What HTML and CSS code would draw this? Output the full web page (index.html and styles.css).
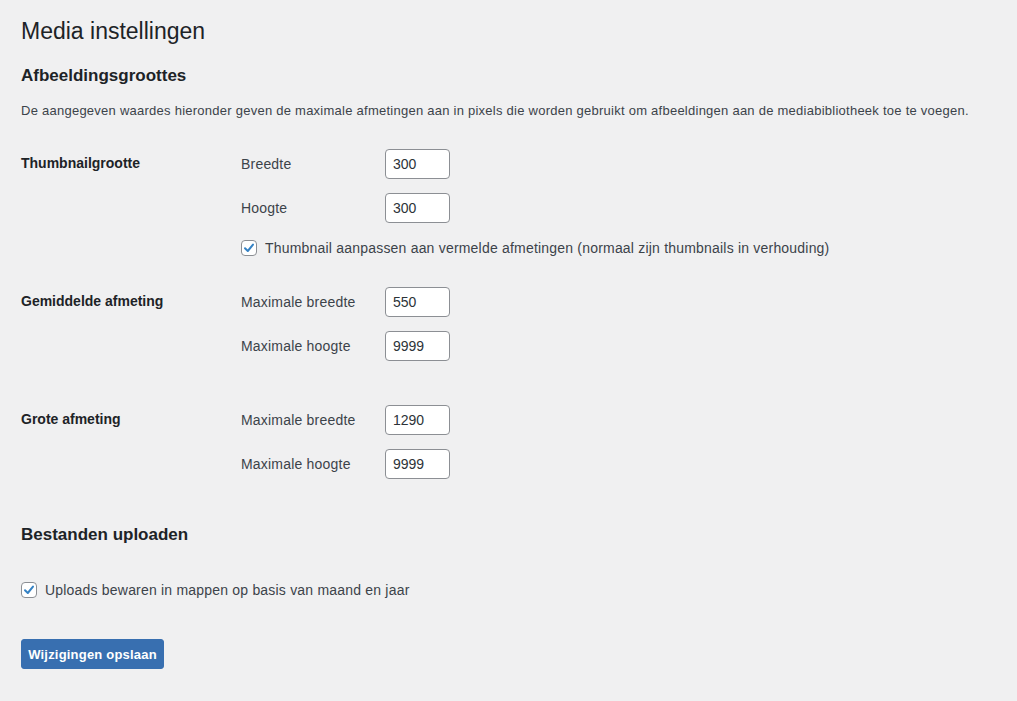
FILE: index.html
```
<!DOCTYPE html>
<html lang="nl">
<head>
    <meta charset="utf-8">
    <title>Media instellingen</title>
    <link rel="stylesheet" href="styles.css">
</head>
<body>
    <div class="wrap">
        <h1>Media instellingen</h1>

        <h2 class="first">Afbeeldingsgroottes</h2>
        <p class="desc">De aangegeven waardes hieronder geven de maximale afmetingen aan in pixels die worden gebruikt om afbeeldingen aan de mediabibliotheek toe te voegen.</p>

        <div class="form-table">
            <div class="row">
                <div class="th">Thumbnailgrootte</div>
                <div class="td">
                    <div class="field">
                        <label>Breedte</label>
                        <input class="small-text" type="text" value="300">
                    </div>
                    <div class="field">
                        <label>Hoogte</label>
                        <input class="small-text" type="text" value="300">
                    </div>
                    <label class="check">
                        <span class="box"><svg width="14" height="14" viewBox="0 0 14 14"><path d="M3 7.2 L5.8 10 L11 3.6" fill="none" stroke="#3582c4" stroke-width="2" stroke-linecap="round" stroke-linejoin="round"/></svg></span>
                        Thumbnail aanpassen aan vermelde afmetingen (normaal zijn thumbnails in verhouding)
                    </label>
                </div>
            </div>

            <div class="row">
                <div class="th">Gemiddelde afmeting</div>
                <div class="td spaced">
                    <div class="field">
                        <label>Maximale breedte</label>
                        <input class="small-text" type="text" value="550">
                    </div>
                    <div class="field">
                        <label>Maximale hoogte</label>
                        <input class="small-text" type="text" value="9999">
                    </div>
                </div>
            </div>

            <div class="row">
                <div class="th">Grote afmeting</div>
                <div class="td">
                    <div class="field">
                        <label>Maximale breedte</label>
                        <input class="small-text" type="text" value="1290">
                    </div>
                    <div class="field">
                        <label>Maximale hoogte</label>
                        <input class="small-text" type="text" value="9999">
                    </div>
                </div>
            </div>
        </div>

        <h2 class="second">Bestanden uploaden</h2>

        <label class="check uploads">
            <span class="box"><svg width="14" height="14" viewBox="0 0 14 14"><path d="M3 7.2 L5.8 10 L11 3.6" fill="none" stroke="#3582c4" stroke-width="2" stroke-linecap="round" stroke-linejoin="round"/></svg></span>
            Uploads bewaren in mappen op basis van maand en jaar
        </label>

        <div class="submit">
            <button class="button-primary">Wijzigingen opslaan</button>
        </div>
    </div>
</body>
</html>
```

FILE: styles.css
```
* {
    font-family: "Liberation Sans", Arial, sans-serif;
    box-sizing: border-box;
}
body {
    margin: 0px;
    padding: 0px;
    background: #f0f0f1;
    color: #3c434a;
    font-size: 13px;
}
.wrap {
    padding: 16px 20px 0px 21px;
}
h1 {
    font-size: 23px;
    font-weight: 400;
    line-height: 30px;
    color: #1d2327;
    margin: 0px;
}
h2 {
    font-size: 17px;
    font-weight: 600;
    line-height: 22px;
    color: #1d2327;
    margin: 0px;
}
h2.first {
    margin-top: 19px;
}
h2.second {
    margin-top: 30px;
}
.desc {
    margin: 14px 0px 0px 0px;
    line-height: 20px;
    letter-spacing: 0.25px;
}
.form-table {
    margin-top: 13px;
}
.row {
    display: grid;
    grid-template-columns: 210px 1fr;
}
.th {
    padding: 20px 10px 20px 0px;
    font-size: 14px;
    font-weight: 600;
    line-height: 18px;
    color: #1d2327;
}
.td {
    padding: 15px 10px;
    font-size: 14px;
    display: flex;
    flex-direction: column;
    gap: 14px;
}
.td.spaced {
    padding-bottom: 29px;
}
.field {
    display: grid;
    grid-template-columns: 144px 65px;
    align-items: center;
    letter-spacing: 0.2px;
}
.small-text {
    width: 65px;
    height: 30px;
    border: 1px solid #8c8f94;
    border-radius: 4px;
    background: #fff;
    padding: 0px 7px;
    font-size: 14px;
    color: #2c3338;
    margin: 0px;
}
.check {
    display: flex;
    align-items: center;
    gap: 8px;
    font-size: 14px;
    line-height: 18px;
    letter-spacing: 0.2px;
}
.td .check {
    margin-top: 2px;
}
.box {
    width: 16px;
    height: 16px;
    border: 1px solid #8c8f94;
    border-radius: 4px;
    background: #fff;
    display: flex;
    align-items: center;
    justify-content: center;
    flex: none;
}
.uploads {
    margin-top: 35px;
}
.submit {
    margin-top: 40px;
}
.button-primary {
    background: #386fb0;
    border: 1px solid #386fb0;
    border-radius: 3px;
    color: #fff;
    font-size: 13px;
    font-weight: 600;
    height: 30px;
    width: 143px;
    padding: 0px;
    white-space: nowrap;
    letter-spacing: 0.2px;
}
```
